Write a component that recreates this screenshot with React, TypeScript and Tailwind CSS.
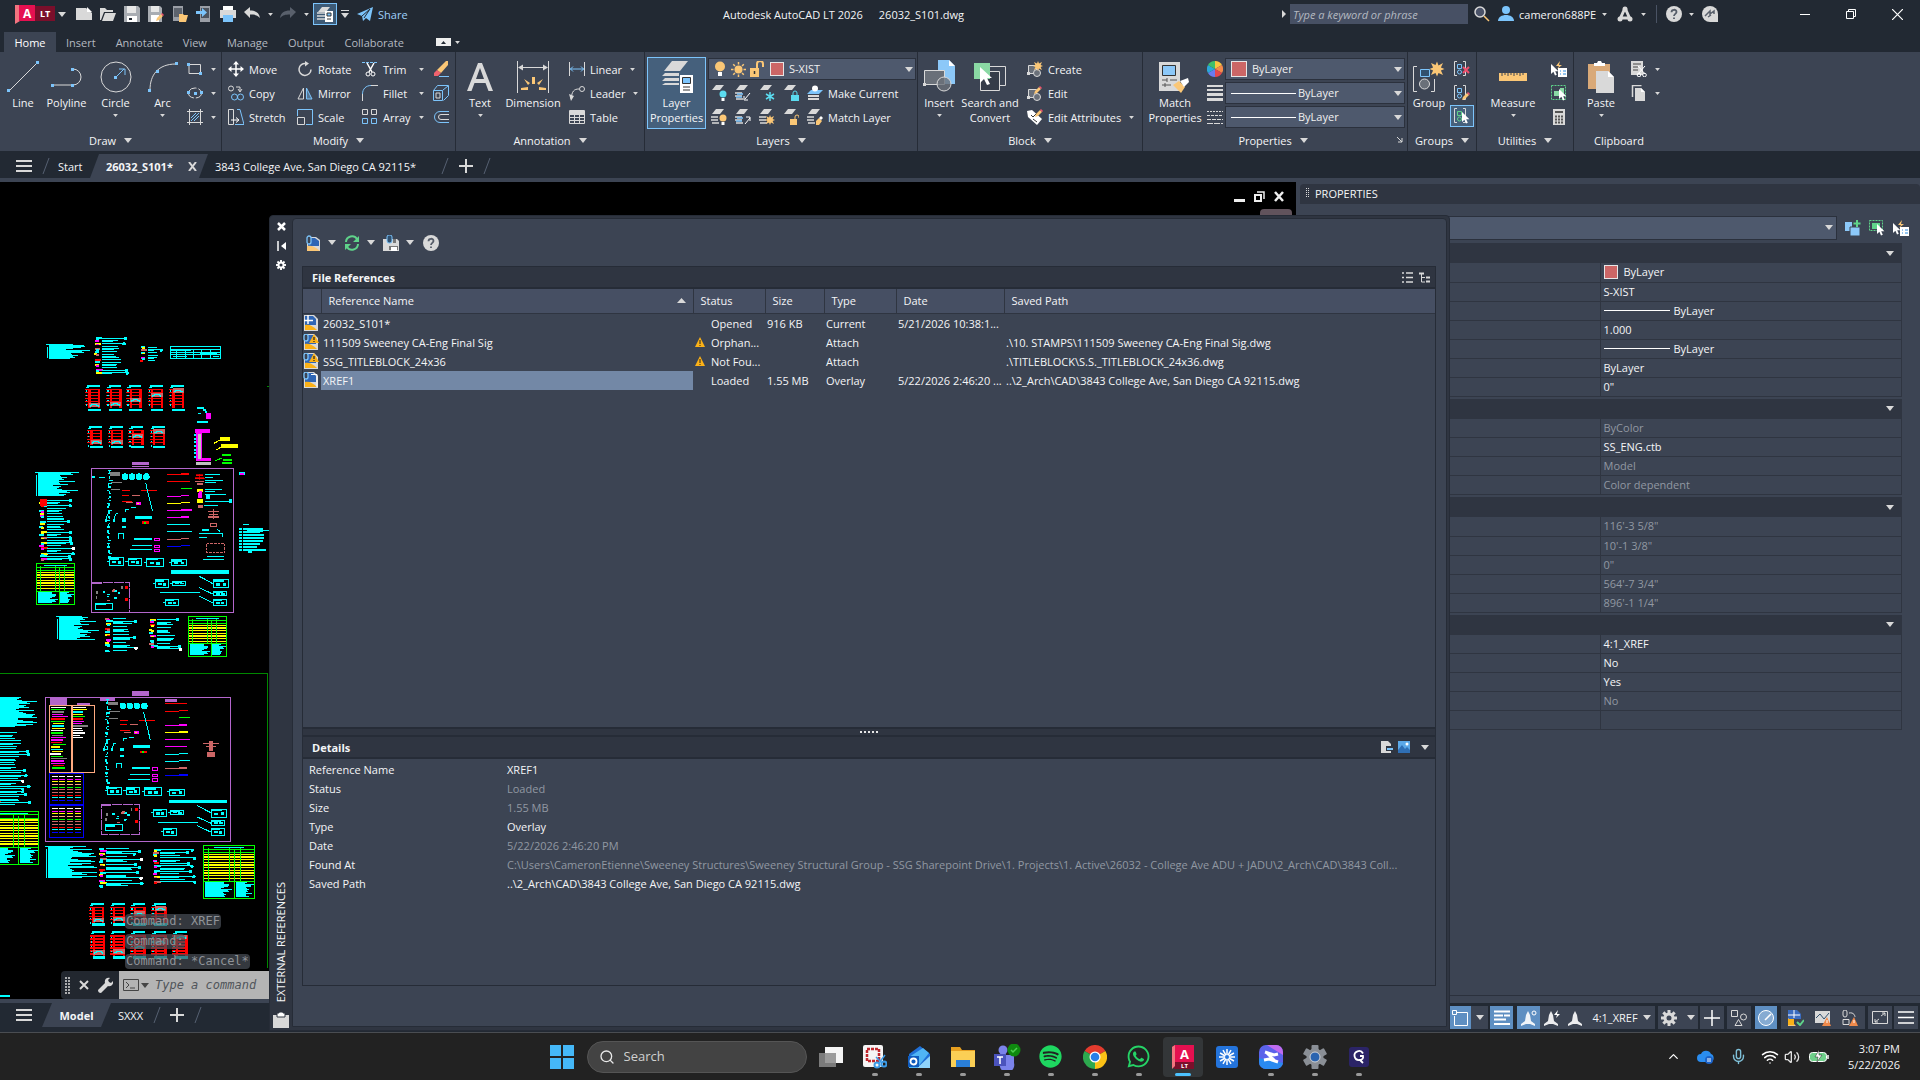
import React from 'react';
import { ChevronUp, Mic, Search, Volume2, Wifi } from 'lucide-react';
import { FaSpotify, FaWhatsapp } from 'react-icons/fa';

const G = '#d9d9d9';
const B = '#7cc4fb';
const O = '#fbc776';
const GR = '#5fd38a';
const RED = '#cc6666';
const CY = '#00ffff';

interface IcProps {
  w?: number;
  h?: number;
  vb?: string;
  children: React.ReactNode;
}

const Ic: React.FC<IcProps> = ({ w = 16, h = 16, vb, children }) => (
  <svg width={w} height={h} viewBox={vb ?? `0 0 ${w} ${h}`} fill="none" className="shrink-0" aria-hidden="true">
    {children}
  </svg>
);

const Caret: React.FC<{ big?: boolean }> = ({ big }) => (
  <svg width={big ? 8 : 5} height={big ? 5 : 3} viewBox="0 0 8 5" className="shrink-0" aria-hidden="true">
    <path d="M0 0h8L4 5z" fill={G} />
  </svg>
);

/* ---------- shared glyphs ---------- */

const Cursor = ({ x, y }: { x: number; y: number }) => (
  <path transform={`translate(${x} ${y})`} d="M0 0v10l2.4-2.2L4 11.6l1.8-.8L4.2 7.2h3.2z" fill="#fff" />
);
const Star = ({ x, y, s = 1 }: { x: number; y: number; s?: number }) => (
  <path
    transform={`translate(${x} ${y}) scale(${s})`}
    d="M0-5l1 2.600L4-4 2.600-1 5 0 2.600 1 4 4 1 2.600 0 5l-1-2.400L-4 4l1.400-3L-5 0l2.400-1L-4-4l3 1.400z"
    fill={O}
  />
);
const Sheet = ({ y, c = G }: { y: number; c?: string }) => <path d={`M5 ${y}h8l-4 5H1z`} fill={c} />;
const Pencil = ({ x, y }: { x: number; y: number }) => (
  <g transform={`translate(${x} ${y})`}>
    <path d="M0 7l1-3 4-4 2 2-4 4z" fill={O} />
    <path d="M5 0l1-1 2 2-1 1z" fill="#f0506e" />
  </g>
);
const Gear = ({ size = 16, c = G, hole = '#3c4453' }: { size?: number; c?: string; hole?: string }) => (
  <Ic w={size} h={size} vb="0 0 16 16">
    {[0, 45, 90, 135].map((a) => (
      <rect key={a} x="6.500" y="0" width="3" height="16" fill={c} transform={`rotate(${a} 8 8)`} />
    ))}
    <circle cx="8" cy="8" r="5.500" fill={c} />
    <circle cx="8" cy="8" r="2.500" fill={hole} />
  </Ic>
);

const Sun = () => (
  <Ic w={15} h={15}>
    {[0, 45, 90, 135].map((a) => (
      <path key={a} d="M7.500 0v2.500M7.500 12.500V15" stroke={O} strokeWidth="1.500" transform={`rotate(${a} 7.5 7.5)`} />
    ))}
    <circle cx="7.500" cy="7.500" r="4" fill={O} />
  </Ic>
);

const DwgIcon: React.FC<{ kind: 'plain' | 'warn' | 'clip' }> = ({ kind }) => (
  <Ic>
    <path d="M1 0h10l4 4v12H1z" fill={G} />
    <path d="M2 1h8l3 3v6H2z" fill="#2f66b5" />
    <path d="M2 15v-5c4-1 8 1 12 5z" fill="#fbb117" />
    {kind === 'plain' && <path d="M5 0v9M1 5.500h9" stroke="#fff" strokeWidth="1.500" />}
    {kind !== 'plain' && <rect x="1" y="0" width="4" height="7" rx="2" fill="#3c4453" stroke={B} strokeWidth="1.300" />}
    {kind === 'warn' && (
      <g>
        <path d="M11 0l5 9H6z" fill="#fbb117" />
        <path d="M11 3v3M11 7v1" stroke="#222" strokeWidth="1.200" />
      </g>
    )}
    {kind === 'clip' && <path d="M8 2.500h6V15" stroke="#fff" />}
  </Ic>
);

const Warn = () => (
  <Ic w={10} h={10}>
    <path d="M5 0l5 10H0z" fill="#fbb117" />
    <path d="M5 3v4M5 8v1" stroke="#222" />
  </Ic>
);

const HelpIcon = () => (
  <Ic>
    <circle cx="8" cy="8" r="8" fill={G} />
    <path d="M5.500 6.200C5.500 3 10.500 3 10.500 6c0 1.800-2.500 2-2.500 4M8 11.500V13" stroke="#555c68" strokeWidth="1.800" />
  </Ic>
);

const QuickSelect = () => (
  <Ic>
    <Cursor x={0} y={3} />
    <path d="M9 0L5 5h3L6 8l5-4H8z" fill={O} />
    <path d="M7 7h9v9H7z" fill="#fff" />
    <path d="M9 10h1M12 10h3M9 13h1M12 13h3" stroke="#2a8be0" />
  </Ic>
);

const ListIcon = () => (
  <Ic w={11} h={11}>
    <path d="M0 1h2M0 5.500h2M0 10h2M4 1h7M4 5.500h7M4 10h7" stroke={G} strokeWidth="1.300" />
  </Ic>
);

/* ---------- title bar ---------- */

const QuickAccess = () => (
  <div className="flex items-center">
    <button aria-label="Application menu" className="ml-[15px] flex h-5 items-center">
      <svg width="41" height="20" viewBox="0 0 41 20" aria-hidden="true">
        <path d="M0 1h5v16l-5 3z" fill="#f2747f" />
        <path d="M4 1h16v16H4z" fill="#e51050" />
        <path d="M20 2h20v15H20z" fill="#7a0f2b" />
        <text x="8" y="14" fontSize="12" fontWeight="700" fill="#fff" fontFamily="Open Sans">A</text>
        <text x="25" y="13" fontSize="9" fontWeight="700" fill="#fff" fontFamily="Open Sans">LT</text>
      </svg>
    </button>
    <span className="ml-[2px]"><Caret big /></span>
    <div className="ml-[10px] flex items-center gap-2">
      <Ic><path d="M0 2h10l6 5v7H0z" fill={G} /><path d="M11 1l5 5h-5z" fill="#fff" /></Ic>
      <Ic><path d="M0 14V2h5l2 2h6v2H4L1 14z" fill={G} /><path d="M5 7h11l-3 8H2z" fill={G} /></Ic>
      <Ic>
        <path d="M0 0h14l2 2v14H0z" fill="#a9adb3" /><path d="M3 0h9v7H3z" fill="#e6e6e6" /><path d="M3 10h10v6H3z" fill="#fff" /><path d="M5 12h3v2H5z" fill="#222933" />
      </Ic>
      <Ic>
        <path d="M0 0h12l2 2v14H0z" fill="#a9adb3" /><path d="M3 0h8v6H3z" fill="#e6e6e6" /><path d="M3 9h8v7H3z" fill="#fff" /><Pencil x={8} y={8} />
      </Ic>
      <Ic><path d="M1 0h10v15H1z" fill="#9a9ea6" /><path d="M2 2h8v9H2z" fill="#5d636d" /><path d="M7 8h4l1 1h4l-2 7H7z" fill={O} /></Ic>
      <Ic><path d="M4 0h10v16H4z" fill="#9a9ea6" /><path d="M5 2h8v10H5z" fill="#4c535e" /><path d="M0 5h6V2l5 4.500L6 11V8H0z" fill={B} /></Ic>
      <Ic>
        <path d="M3 0h10v4H3z" fill="#fff" /><path d="M0 4h16v8H0z" fill={G} /><path d="M3 9h10v7H3z" fill={B} />
      </Ic>
      <Ic><path d="M0 6l6-5v3.500c6 0 9 2 10 7.500-3-3-5-3.500-10-3.500V12z" fill={G} /></Ic>
    </div>
    <span className="ml-2"><Caret /></span>
    <span className="ml-[7px]">
      <Ic><path d="M16 6l-6-5v3.500C4 4.500 1 6.500 0 12c3-3 5-3.500 10-3.500V12z" fill="#59606c" /></Ic>
    </span>
    <span className="ml-2"><Caret /></span>
    <button aria-label="Layer state" className="ml-1 flex h-[22px] w-6 items-center justify-center border border-[#7cc4fb] bg-[#3d5a76]">
      <Ic>
        <Sheet y={1} /><path d="M0 7h8M0 10h8M0 13h8" stroke={G} strokeWidth="1.500" /><path d="M8 5h8v11H8z" fill="#fff" /><path d="M10 7h4v3h-4z" fill={B} stroke="#333" /><path d="M10 13h4" stroke="#333" />
      </Ic>
    </button>
    <span className="ml-1">
      <Ic w={8} h={8}><path d="M0 .5h8" stroke={G} /><path d="M0 3h8L4 8z" fill={G} /></Ic>
    </span>
    <button className="ml-2 flex items-center gap-[5px] text-[11px] text-[#9fd0fb]">
      <Ic><path d="M0 8L16 1l-3 14-4-3-3 3-1-5z" fill={B} /><path d="M5 10l8-7-6 9" stroke="#222933" /></Ic>
      Share
    </button>
  </div>
);

const TitleBar = () => (
  <header className="relative flex h-7 items-center justify-between bg-[#222933]">
    <QuickAccess />
    <div className="absolute left-[723px] flex gap-4 whitespace-pre">
      <span>Autodesk AutoCAD LT 2026</span>
      <span>26032_S101.dwg</span>
    </div>
    <div className="flex items-center pr-[17px]">
      <Ic w={4} h={8}><path d="M0 0l4 4-4 4z" fill={G} /></Ic>
      <input
        aria-label="Search help"
        placeholder="Type a keyword or phrase"
        className="ml-1 h-5 w-[178px] bg-[#475064] px-[3px] italic text-white placeholder:text-[#b4b9c1]"
      />
      <span className="ml-[6px]">
        <Ic><circle cx="6" cy="6" r="5" stroke={G} strokeWidth="1.500" fill="#4a5268" /><path d="M10 10l5 5" stroke={O} strokeWidth="1.500" /></Ic>
      </span>
      <span className="ml-2">
        <Ic><circle cx="8" cy="4" r="4" fill={B} /><path d="M0 15c0-8 16-8 16 0z" fill={B} /></Ic>
      </span>
      <button className="ml-[5px] flex items-center text-[11px]"><span className="w-[83px] text-left">cameron688PE</span><Caret /></button>
      <button aria-label="Autodesk App Store" className="ml-[10px] flex items-center gap-2">
        <Ic><path d="M8 2L3 13M8 2l5 11M3 12h10" stroke={G} strokeWidth="3" /><circle cx="8" cy="3" r="2.500" fill={G} /><circle cx="3" cy="13" r="2.500" fill={G} /><circle cx="13" cy="13" r="2.500" fill={G} /></Ic>
        <Caret />
      </button>
      <span className="ml-[10px] h-[18px] w-px bg-[#4a5364]" />
      <button aria-label="Help" className="ml-[9px] flex items-center gap-[7px]"><HelpIcon /><Caret /></button>
      <button aria-label="Assistant" className="ml-2">
        <Ic><path d="M8 0a8 8 0 018 8v8H8A8 8 0 018 0z" fill={G} /><path d="M3 10l5-5v3l4-3v3M6 11l3-2" stroke="#59606c" strokeWidth="1.500" /></Ic>
      </button>
      <button aria-label="Minimize" className="ml-[82px]"><Ic w={10} h={10}><path d="M0 5.500h10" stroke="#fff" /></Ic></button>
      <button aria-label="Restore" className="ml-9"><Ic w={10} h={10}><path d="M.5 2.500h7v7h-7zM2.500 2.500v-2h7v7h-2" stroke="#fff" /></Ic></button>
      <button aria-label="Close" className="ml-9"><Ic w={11} h={11}><path d="M0 0l11 11M11 0L0 11" stroke="#fff" strokeWidth="1.200" /></Ic></button>
    </div>
  </header>
);

const RibbonTabs = () => (
  <nav className="flex h-6 items-end bg-[#222933] pl-1">
    <button className="h-5 w-[52px] bg-[#3c4453] text-[11px] text-white">Home</button>
    {['Insert', 'Annotate', 'View', 'Manage', 'Output', 'Collaborate'].map((t) => (
      <button key={t} className="h-5 px-[10px] text-[11px] text-[#b4b9c1]">{t}</button>
    ))}
    <button aria-label="Ribbon display" className="ml-[22px] flex h-5 items-center gap-1">
      <Ic w={15} h={8}><path d="M0 0h15v8H0z" fill="#eee" /><path d="M5 6h5L7.500 3z" fill="#222933" /></Ic>
      <Caret />
    </button>
  </nav>
);

/* ---------- ribbon ---------- */

const Panel: React.FC<{ title: string; width: string; plain?: boolean; launcher?: boolean; children: React.ReactNode }> = ({
  title, width, plain, launcher, children,
}) => (
  <section className={`flex flex-col pt-[5px] ${width} ${plain ? '' : 'border-r border-[#262c37]'}`}>
    <div className="flex h-[72px]">{children}</div>
    <div className="flex h-[22px] items-center justify-center gap-2 text-[11px]">
      {launcher && <span className="flex-1" />}
      {title}
      {!plain && <Caret big />}
      {launcher && (
        <span className="flex flex-1 justify-end pr-1">
          <Ic w={6} h={6}><path d="M0 0l5 5M5 1v4H1" stroke={G} /></Ic>
        </span>
      )}
    </div>
  </section>
);

const Big: React.FC<{ label: string; width: string; caret?: boolean; on?: boolean; children: React.ReactNode }> = ({
  label, width, caret, on, children,
}) => (
  <button
    className={`flex shrink-0 flex-col items-center text-[11px] leading-[15px] ${width} ${
      on ? 'border border-[#7cc4fb] bg-[#45607c]' : 'border border-transparent'
    }`}
  >
    <span className="flex h-[37px] items-center">{children}</span>
    <span className="whitespace-pre text-center">{label}</span>
    {caret && <span className="mt-1"><Caret /></span>}
  </button>
);

const Tool: React.FC<{ label?: string; caret?: boolean; name?: string; labelWidth?: string; children: React.ReactNode }> = ({
  label, caret, name, labelWidth = '', children,
}) => (
  <button aria-label={name ?? label} className="flex h-6 items-center whitespace-nowrap text-[11px]">
    {children}
    {label && <span className={`ml-[5px] text-left ${labelWidth}`}>{label}</span>}
    {caret && <span className="ml-2"><Caret /></span>}
  </button>
);

const Dot = ({ x, y }: { x: number; y: number }) => <rect x={x} y={y} width="3" height="3" fill={B} />;

const DrawPanel = () => (
  <Panel title="Draw" width="w-[222px]">
    <Big label="Line" width="w-[46px]">
      <Ic w={32} h={32}><path d="M2 30L30 2" stroke={G} /><Dot x={0} y={28} /><Dot x={29} y={0} /></Ic>
    </Big>
    <Big label="Polyline" width="w-[41px]">
      <Ic w={32} h={32}><path d="M2 24h20a7 7 0 000-16" stroke={G} /><Dot x={0} y={23} /><Dot x={20} y={23} /><Dot x={20} y={7} /></Ic>
    </Big>
    <Big label="Circle" width="w-[57px]" caret>
      <Ic w={32} h={32}><circle cx="16" cy="16" r="15" stroke={G} /><path d="M16 16l8-8M19 8h6v6" stroke={B} /><Dot x={14} y={15} /></Ic>
    </Big>
    <Big label="Arc" width="w-[37px]" caret>
      <Ic w={30} h={32}><path d="M2 29C2 14 10 3 28 3" stroke={G} /><Dot x={0} y={28} /><Dot x={8} y={9} /><Dot x={27} y={1} /></Ic>
    </Big>
    <div className="ml-[6px] flex flex-col">
      <Tool name="Rectangle" caret><Ic><path d="M2 3.500h11.500v9H2z" stroke={G} /><Dot x={0} y={2} /><Dot x={12} y={11} /></Ic></Tool>
      <Tool name="Ellipse" caret><Ic><ellipse cx="8" cy="8" rx="6.500" ry="5" stroke={G} strokeDasharray="8 2" /><Dot x={0} y={6} /><Dot x={7} y={7} /><Dot x={13} y={6} /></Ic></Tool>
      <Tool name="Hatch" caret><Ic><path d="M2.500 0v16M13.500 0v16M0 2.500h16M0 13.500h16" stroke={G} /><path d="M4 9l5-5M4 12l8-8M7 12l5-5" stroke={B} /></Ic></Tool>
    </div>
  </Panel>
);

const ModifyPanel = () => (
  <Panel title="Modify" width="w-[234px]">
    <div className="ml-[6px] flex w-[69px] flex-col">
      <Tool label="Move"><Ic><path d="M8 1v14M1 8h14" stroke="#fff" strokeWidth="1.500" /><path d="M8 0l3 3.500H5zM8 16l3-3.500H5zM0 8l3.500-3v6zM16 8l-3.500-3v6z" fill="#fff" /></Ic></Tool>
      <Tool label="Copy"><Ic><circle cx="3" cy="3.500" r="2.500" stroke={G} /><path d="M8 2h4v4M10 4l2 3 2-3" stroke={G} /><circle cx="6.500" cy="12" r="3" stroke={B} /><circle cx="12.500" cy="12" r="3" stroke={B} /></Ic></Tool>
      <Tool label="Stretch"><Ic><path d="M.5.5h5v15h-5z" stroke={G} /><path d="M9 .5l3 0 4 15H7" stroke={B} /><path d="M3 11h7M8 8.500l3 2.500-3 2.500" stroke="#fff" /></Ic></Tool>
    </div>
    <div className="flex w-[65px] flex-col">
      <Tool label="Rotate"><Ic><path d="M9 2.500a6 6 0 105 6" stroke={G} strokeWidth="1.500" /><path d="M8 0l4 2.500L8 5.500z" fill={G} /></Ic></Tool>
      <Tool label="Mirror"><Ic><path d="M6.500 3v11H1z" stroke={G} /><path d="M9.500 3v11H15z" stroke={B} fill={B} fillOpacity=".4" /></Ic></Tool>
      <Tool label="Scale"><Ic><path d="M.5 7V.5h15v15H9" stroke={B} /><path d="M.5 8.500h7v7h-7z" stroke={G} /></Ic></Tool>
    </div>
    <div className="flex w-[71px] flex-col">
      <Tool label="Trim" labelWidth="w-[28px]" caret><Ic><path d="M0 1.500h16" stroke={B} strokeDasharray="3 1" /><path d="M5 2l5 9M12 2L7 11" stroke="#fff" strokeWidth="1.500" /><circle cx="6" cy="13" r="2" stroke="#fff" /><circle cx="11" cy="13" r="2" stroke="#fff" /></Ic></Tool>
      <Tool label="Fillet" labelWidth="w-[28px]" caret><Ic><path d="M.5 16V9" stroke={G} /><path d="M.5 9C.5 4 4 .5 9 .5" stroke={B} /><path d="M9 .5h7" stroke={G} /></Ic></Tool>
      <Tool label="Array" labelWidth="w-[28px]" caret><Ic><path d="M.5.5h5v5h-5zM9.500.5h5v5h-5z" stroke={G} /><path d="M.5 9.500h5v5h-5zM9.500 9.500h5v5h-5z" stroke={B} /></Ic></Tool>
    </div>
    <div className="flex flex-col">
      <Tool name="Erase"><Ic><path d="M4 9l9-9h2v4l-7 8z" fill={O} /><path d="M4 9l4 3-3 3H1v-3z" fill="#f0626e" /><path d="M6 15.500h10" stroke={B} /></Ic></Tool>
      <Tool name="Explode"><Ic><path d="M.5 5.500h9v10h-9zM.5 5.500l4-5h11v10l-5 5M10 5l5-4" stroke={B} /><path d="M3 8h4v5H3z" stroke={G} /></Ic></Tool>
      <Tool name="Offset"><Ic><path d="M16 2.500H7a5.500 5.500 0 000 11h9" stroke={B} /><path d="M16 5.500H8a2.500 2.500 0 000 5h8" stroke={G} /></Ic></Tool>
    </div>
  </Panel>
);

const AnnotationPanel = () => (
  <Panel title="Annotation" width="w-[189px]">
    <Big label="Text" width="w-[48px]" caret>
      <Ic w={26} h={28}><path d="M0 28L11 0h4l11 28h-4.500l-3-8h-11l-3 8zM9 16h8L13 5z" fill={G} /></Ic>
    </Big>
    <Big label="Dimension" width="w-[58px]">
      <Ic w={32} h={32}>
        <path d="M.5 0v32M31.500 0v32M2 6.500h28" stroke={G} /><path d="M1 6.500l5-3v6zM31 6.500l-5-3v6z" fill={G} />
        <path d="M15 16h3v7h-3zM7 18l4 6 2-2zM26 18l-4 6-2-2zM4 27l7-1v3H4zM29 27l-7-1v3h7z" fill={O} />
      </Ic>
    </Big>
    <div className="ml-[7px] flex flex-col">
      <Tool label="Linear" caret><Ic><path d="M.5 1v14M15.500 1v14" stroke={G} /><path d="M1 8h14M4 5.500L1.500 8 4 10.500M12 5.500L14.500 8 12 10.500" stroke={B} /></Ic></Tool>
      <Tool label="Leader" caret><Ic><path d="M2 14C3 6 5 4 10 4" stroke={G} /><circle cx="13" cy="4" r="2.500" stroke={G} /><path d="M0 9l2 7 3-5z" fill={G} /></Ic></Tool>
      <Tool label="Table"><Ic><path d="M.5 1.500h15v13H.5zM.5 5.500h15M.5 8.500h15M.5 11.500h15M5.500 5v10M10.500 5v10" stroke={G} /><path d="M1 2h14v3H1z" fill={G} /></Ic></Tool>
    </div>
  </Panel>
);

const LayerGlyph: React.FC<{ children: React.ReactNode; stack?: boolean }> = ({ children, stack }) => (
  <Ic>
    <Sheet y={0} />
    {stack && <path d="M0 8h7M0 11h7M1 14h7" stroke={G} strokeWidth="1.500" />}
    {children}
  </Ic>
);

const Bulb = ({ c, x = 8 }: { c: string; x?: number }) => (
  <g><circle cx={x + 4} cy="9" r="3.500" fill={c} /><path d={`M${x + 2.5} 13h3v3h-3z`} fill="#fff" /></g>
);

const selectCls = 'w-full appearance-none border border-[#2b313d] bg-[#4e596d] text-[11px] leading-[16px] text-[#f0f0f0]';

const LayersPanel = () => (
  <Panel title="Layers" width="w-[273px]">
    <Big label={'Layer\nProperties'} width="ml-[2px] w-[59px]" on>
      <Ic w={32} h={32}>
        <path d="M11 0h16l-8 10H3z" fill={G} />
        <path d="M4 12h14v3H1zM4 17h14v3H1zM4 22h14v2H1z" fill={G} />
        <path d="M19 14h13v18H19z" fill="#fff" /><path d="M21.500 16.500h8v6h-8z" fill={B} stroke="#333" /><path d="M22 26h7M22 29h7" stroke="#333" />
      </Ic>
    </Big>
    <div className="ml-[2px] w-[208px]">
      <div className="relative flex h-6 items-center">
        <select aria-label="Layer" className={`${selectCls} h-[22px] pl-20`}><option>S-XIST</option></select>
        <div className="pointer-events-none absolute inset-x-0 flex items-center pr-[3px]">
          <span className="ml-1 flex items-center gap-[3px]">
            <Ic><circle cx="8" cy="5.500" r="5" fill={O} /><path d="M6 11h4v4H6z" fill="#fff" /></Ic>
            <Sun />
            <Ic><path d="M1 7h9v9H1z" fill={O} /><path d="M8 7V3a3 3 0 016 0v3" stroke={O} strokeWidth="2" /><path d="M5.500 10v3" stroke="#333" strokeWidth="1.500" /></Ic>
            <span className="ml-[2px] size-[14px] border border-[#e6e6e6] bg-[#cc6666]" />
          </span>
          <span className="ml-auto"><Caret big /></span>
        </div>
      </div>
      <div className="ml-[3px] flex gap-2">
        <Tool name="Off"><LayerGlyph><Bulb c="#5bdcf0" /></LayerGlyph></Tool>
        <Tool name="Isolate"><LayerGlyph stack><path d="M2 9h6M1 12h6" stroke={B} strokeWidth="1.500" /><path d="M15 8l-5 6M9 11v4h4" stroke="#fff" /></LayerGlyph></Tool>
        <Tool name="Freeze"><LayerGlyph><path d="M11 7v9M7 9l8 5M15 9l-8 5" stroke="#5bdcf0" strokeWidth="1.500" /></LayerGlyph></Tool>
        <Tool name="Lock"><LayerGlyph><path d="M8 10h8v6H8z" fill="#5bdcf0" /><path d="M10 10V8a2 2 0 014 0v2" stroke="#5bdcf0" /></LayerGlyph></Tool>
        <Tool label="Make Current"><Ic><path d="M4 5h12l-4 4H0z" fill={B} /><circle cx="8" cy="3.500" r="3" fill="#fff" /><path d="M1 11h11M1 14h11" stroke={G} strokeWidth="2" /></Ic></Tool>
      </div>
      <div className="ml-[3px] flex gap-2">
        <Tool name="Turn on"><LayerGlyph stack><Bulb c={O} /></LayerGlyph></Tool>
        <Tool name="Unisolate"><LayerGlyph stack><path d="M2 9h6M1 12h6" stroke={B} strokeWidth="1.500" /><path d="M10 15l5-6M11 8h4v4" stroke="#fff" /></LayerGlyph></Tool>
        <Tool name="Thaw"><LayerGlyph stack><Star x={11} y={11} /></LayerGlyph></Tool>
        <Tool name="Unlock"><LayerGlyph><path d="M7 10h7v6H7z" fill={O} /><path d="M12 10V8a2 2 0 014 0v1" stroke={O} /></LayerGlyph></Tool>
        <Tool label="Match Layer"><LayerGlyph stack><path d="M9 12l3-3 3 3-3 4H9z" fill={O} /><path d="M12 9l2-2 2 2-2 2z" fill="#fff" /></LayerGlyph></Tool>
      </div>
    </div>
  </Panel>
);

const BlockGlyph = ({ children }: { children: React.ReactNode }) => (
  <Ic><path d="M1.500 4.500h8v8h-8z" fill="#6a7079" stroke={G} /><circle cx="10" cy="12" r="3.500" fill="#6a7079" stroke={G} /><path d="M0 11h3v3H0z" fill={G} />{children}</Ic>
);

const BlockPanel = () => (
  <Panel title="Block" width="w-[225px]">
    <Big label="Insert" width="w-[42px]" caret>
      <Ic w={32} h={34}>
        <path d="M15 0h11l6 6v18H15z" fill="#8cc8f8" /><path d="M26 0l6 6h-6z" fill="#fff" />
        <path d="M1.500 10.500h20v14h-20z" fill="#6a7079" stroke={G} /><circle cx="21" cy="24" r="7" fill="#6a7079" fillOpacity=".8" stroke={G} /><path d="M0 23h3v3H0z" fill={G} />
      </Ic>
    </Big>
    <Big label={'Search and\nConvert'} width="w-[60px]">
      <Ic w={32} h={32}>
        <path d="M13 5.500h18.500v19H26" stroke={G} /><path d="M7 10.500h18.500v19H6.500V18" stroke={G} fill="#353c49" /><path d="M0 2h16v16H0z" fill="#8ad9a4" />
        <path d="M6 6v16l4-4 3 6 3-1-3-6h5z" fill="#fff" />
      </Ic>
    </Big>
    <div className="ml-[7px] flex flex-col">
      <Tool label="Create"><BlockGlyph><Star x={11} y={5} /></BlockGlyph></Tool>
      <Tool label="Edit"><BlockGlyph><Pencil x={7} y={2} /></BlockGlyph></Tool>
      <Tool label="Edit Attributes" caret>
        <Ic><path d="M0 2l5-1 10 9-5 6L1 8z" fill="#fff" /><path d="M4 6l2 2 4-4M6 10l4 3" stroke="#333" /><Pencil x={8} y={1} /></Ic>
      </Tool>
    </div>
  </Panel>
);

const LineSelect: React.FC<{ name: string; swatch?: boolean }> = ({ name, swatch }) => (
  <div className="relative flex h-6 items-center">
    <select aria-label={name} className={`${selectCls} h-[22px] ${swatch ? 'pl-[26px]' : 'pl-[72px]'}`}><option>ByLayer</option></select>
    <div className="pointer-events-none absolute inset-x-0 flex items-center justify-between pl-[6px] pr-[3px]">
      {swatch ? <span className="size-4 border border-[#e6e6e6] bg-[#cc6666]" /> : <span className="h-px w-[65px] bg-white" />}
      <Caret big />
    </div>
  </div>
);

const PropertiesRibbonPanel = () => (
  <Panel title="Properties" width="w-[265px]" launcher>
    <Big label={'Match\nProperties'} width="w-[64px]">
      <Ic w={32} h={32}>
        <path d="M0 1h21v29H0z" fill={G} /><path d="M3.500 4.500h13v10h-13z" fill="#8cc8f8" stroke="#333" /><path d="M3 19h5M11 19h7M3 24h9M8 17v4M6 22v4" stroke="#555" />
        <path d="M14 24l6-4 6 6-4 6z" fill={O} /><path d="M21 20l8-3 1 4-5 5z" fill="#fff" />
      </Ic>
    </Big>
    <div className="flex flex-col">
      <Tool name="Color">
        <Ic>
          <path d="M8 8L8 0a8 8 0 017 4z" fill="#f9c440" /><path d="M8 8l7-4a8 8 0 010 8z" fill="#f58a4b" /><path d="M8 8l7 4a8 8 0 01-7 4z" fill="#e5484d" />
          <path d="M8 8v8a8 8 0 01-7-4z" fill="#6a7bf0" /><path d="M8 8l-7 4a8 8 0 010-8z" fill="#2aa7d8" /><path d="M8 8L1 4a8 8 0 017-4z" fill="#3fbf6a" />
        </Ic>
      </Tool>
      <Tool name="Lineweight"><Ic><path d="M0 1h16M0 5h16" stroke={G} strokeWidth="2" /><path d="M0 9.500h16M0 14.500h16" stroke={G} strokeWidth="3" /></Ic></Tool>
      <Tool name="Linetype"><Ic><path d="M0 2.500h16" stroke={G} strokeDasharray="2 1" /><path d="M0 6.500h16" stroke={G} strokeDasharray="3 1" /><path d="M0 10.500h16" stroke={G} strokeDasharray="4 1" /><path d="M0 14.500h16" stroke={G} strokeDasharray="6 1" /></Ic></Tool>
    </div>
    <div className="ml-[2px] w-[180px]">
      <LineSelect name="Object color" swatch />
      <LineSelect name="Lineweight" />
      <LineSelect name="Linetype" />
    </div>
  </Panel>
);

const GroupBase = ({ c = B }: { c?: string }) => (
  <g><path d="M3 .5H.5v14H3M9 .5h2.500v14H9" stroke={G} /><path d="M3.500 3.500h4v4h-4z" stroke={c} /><circle cx="5.500" cy="11" r="2" stroke={c} /></g>
);

const ToolsRight = () => (
  <>
    <Panel title="Groups" width="w-[69px]">
      <Big label="Group" width="w-[42px]">
        <Ic w={32} h={32}>
          <path d="M4 5.500H.5v25H4M18 30.500h3.500V18" stroke={G} /><path d="M7.500 8.500h9v7h-9z" stroke={B} fill="#31506e" /><circle cx="11.500" cy="23" r="5" fill="#6a7079" stroke={G} /><Star x={24} y={8} s={1.5} />
        </Ic>
      </Big>
      <div className="flex w-6 flex-col items-center">
        <Tool name="Ungroup"><Ic><GroupBase /><path d="M9 6l6 6M15 6l-6 6" stroke="#f0506e" strokeWidth="2" /></Ic></Tool>
        <Tool name="Group edit"><Ic><GroupBase /><Pencil x={8} y={8} /></Ic></Tool>
        <button aria-label="Group selection" className="flex h-[22px] w-6 items-center justify-center self-center border border-[#7cc4fb] bg-[#45607c]">
          <Ic><GroupBase c={GR} /><Cursor x={8} y={4} /></Ic>
        </button>
      </div>
    </Panel>
    <Panel title="Utilities" width="w-[97px]">
      <Big label="Measure" width="w-[72px]" caret>
        <Ic w={28} h={8}><path d="M0 0h28v8H0z" fill={O} /><path d="M3 0v3M6 0v2M9 0v3M12 0v2M15 0v3M18 0v2M21 0v3M24 0v2" stroke="#3c4453" /></Ic>
      </Big>
      <div className="flex w-5 flex-col items-center">
        <Tool name="Quick select"><QuickSelect /></Tool>
        <Tool name="Select all"><Ic><path d="M.5.5h14v14H.5z" stroke={GR} strokeDasharray="2 1" /><path d="M3 6h6V3h4v8H3z" fill="#8ad9a4" /><Cursor x={8} y={4} /></Ic></Tool>
        <Tool name="Calculator"><Ic><path d="M2 0h12v16H2z" fill={G} /><path d="M4 2h8v2H4z" fill="#555" /><path d="M4 7.500h8M4 10.500h8M4 13.500h8" stroke="#555" strokeWidth="1.800" strokeDasharray="2 1" /></Ic></Tool>
      </div>
    </Panel>
    <Panel title="Clipboard" width="w-[90px]" plain>
      <Big label="Paste" width="w-[54px]" caret>
        <Ic w={26} h={32}><path d="M0 3h22v25H0z" fill="#d9a978" /><path d="M6 2h3l1-2h3l1 2h3v3H6z" fill="#fff" /><path d="M8 10h12l6 6v16H8z" fill={G} /><path d="M20 10l6 6h-6z" fill="#fff" /></Ic>
      </Big>
      <div className="ml-[3px] flex flex-col">
        <Tool name="Cut" caret><Ic><path d="M0 0h12v14H0z" fill={G} /><path d="M2 3h8M2 6h5M2 9h5" stroke="#444" /><path d="M7 5l7 8M14 5l-7 8" stroke="#fff" /><circle cx="8" cy="14" r="1.800" stroke="#fff" /><circle cx="13.500" cy="14" r="1.800" stroke="#fff" /></Ic></Tool>
        <Tool name="Copy clip" caret><Ic><path d="M1.500 12V.5h9" stroke={G} strokeWidth="1.500" /><path d="M4 3h6l4 4v9H4z" fill={G} /><path d="M10 3l4 4h-4z" fill="#fff" /></Ic></Tool>
      </div>
    </Panel>
  </>
);

const Slash = () => (
  <svg width="8" height="16" viewBox="0 0 8 16" className="shrink-0" aria-hidden="true"><path d="M1 16L7 0" stroke="#566072" /></svg>
);
const Plus = () => <Ic w={14} h={14}><path d="M7 0v14M0 7h14" stroke={G} strokeWidth="2" /></Ic>;
const Burger = () => <Ic w={16} h={12}><path d="M0 1h16M0 6h16M0 11h16" stroke={G} strokeWidth="2" /></Ic>;

const FileTabs = () => (
  <nav className="flex h-[27px] items-center bg-[#222933] pl-4 pt-[3px] text-[11px]">
    <button aria-label="Tab menu"><Burger /></button>
    <span className="ml-[10px]"><Slash /></span>
    <button className="ml-2 w-[32px] text-left">Start</button>
    <button className="flex h-6 w-[118px] items-center bg-[#3c4453] pl-4 font-bold [clip-path:polygon(9px_0,100%_0,109px_100%,0_100%)]">
      <span className="w-[82px] text-left">26032_S101*</span>
      <Ic w={9} h={9}><path d="M1 0l7 9M8 0L1 9" stroke={G} strokeWidth="2" /></Ic>
    </button>
    <button className="ml-[7px] w-[226px] text-left">3843 College Ave, San Diego CA 92115*</button>
    <Slash />
    <button aria-label="New tab" className="ml-[10px]"><Plus /></button>
    <span className="ml-[10px]"><Slash /></span>
  </nav>
);

/* ---------- model space drawing ---------- */

const rnd = (i: number) => {
  const v = Math.sin(i * 12.9898 + 4.1) * 43758.5453;
  return v - Math.floor(v);
};

interface BoxProps { x: number; y: number; w: number; h: number; seed?: number; c?: string }

const TextBlock: React.FC<BoxProps> = ({ x, y, w, h, seed = 1, c = CY }) => (
  <g fill={c}>
    <rect x={x} y={y} width="26" height="4" />
    <rect x={x + 3} y={y + 9} width="4" height={h - 12} />
    {Array.from({ length: Math.floor(h / 3) }, (_, i) => (
      <rect key={i} x={x + 9} y={y + i * 3} width={(w - 9) * (0.35 + 0.65 * rnd(i + seed))} height="3" />
    ))}
  </g>
);

const mix = [CY, '#ff0', CY, '#f0f', '#ff0', CY, RED, CY, '#ff0', '#f0f', '#f00'];

/* detail marks on the left with note leaders running right */
const Notes: React.FC<BoxProps> = ({ x, y, w, h, seed = 1 }) => (
  <g>
    {Array.from({ length: Math.floor(h / 8) }, (_, i) => {
      const r = rnd(i * 3 + seed);
      const len = (w - 36) * (0.45 + 0.55 * r);
      const yy = y + i * 8;
      return (
        <g key={i}>
          {i % 4 !== 3 && <rect x={x + r * 6} y={yy + 1} width={10 + r * 12} height="6" fill={mix[(i + seed) % 11]} />}
          {i % 2 === 0 && <rect x={x + 6} y={yy + 4} width="9" height="5" fill={mix[(i * 2 + seed + 3) % 11]} />}
          <rect x={x + 24} y={yy + 2} width={len} height="3" fill={CY} />
          {i % 3 === 1 && <rect x={x + 24} y={yy + 5} width={(w - 40) * (0.3 + 0.5 * rnd(i + 9))} height="3" fill={CY} />}
          {r > 0.55 && <rect x={x + 22 + len} y={yy} width="10" height="9" rx="3" fill={i % 7 === 4 ? '#fff' : CY} />}
        </g>
      );
    })}
  </g>
);

const Schedule: React.FC<BoxProps> = ({ x, y, w, h }) => {
  const top = h * 0.68;
  return (
    <g>
      {Array.from({ length: Math.floor((top - 24) / 8) }, (_, i) => (
        <rect key={i} x={x} y={y + 24 + i * 8} width={w} height="4" fill="#ff0" />
      ))}
      <rect x={x + w * 0.2} y={y + 4} width={w * 0.6} height="3" fill={CY} />
      {Array.from({ length: Math.floor((h - top - 4) / 3) }, (_, i) => (
        <g key={i} fill={CY}>
          <rect x={x + 3} y={y + top + 2 + i * 3} width={w * (0.3 + 0.23 * rnd(i))} height="3" />
          <rect x={x + w * 0.63} y={y + top + 2 + i * 3} width={w * (0.15 + 0.2 * rnd(i + 5))} height="3" />
        </g>
      ))}
      <path
        d={`M${x} ${y}h${w}v${h}h${-w}zM${x} ${y + 10}h${w}M${x} ${y + 20}h${w}M${x} ${y + top}h${w}M${x + w * 0.1} ${y + 8}v${top - 8}M${x + w * 0.5} ${y + 8}v${top - 8}M${x + w * 0.73} ${y + 8}v${top - 8}M${x + w * 0.6} ${y + 14}v${h - 14}`}
        stroke="#0f0" strokeWidth="3" fill="none"
      />
    </g>
  );
};

const Ladder: React.FC<{ x: number; y: number; h: number; hot: number }> = ({ x, y, h, hot }) => (
  <g>
    <rect x={x + 4} y={y} width="38" height="5" fill={CY} />
    <rect x={x} y={y + 5} width="10" height="3" fill={CY} />
    <path d={`M${x + 10} ${y + 12}V${y + h - 8}M${x + 39} ${y + 12}V${y + h - 8}`} stroke="#f00" strokeWidth="7" />
    {Array.from({ length: Math.floor((h - 16) / 9) }, (_, i) => (
      <rect key={i} x={x - 3} y={y + 12 + i * 9} width="44" height="4" fill="#f00" />
    ))}
    <rect x={x + 8} y={y + 10 + (h - 30) * hot} width="34" height="13" fill={RED} />
    <path d={`M${x + 12} ${y + 22 + (h - 30) * hot}v-4h5v-3h14v3h5v4`} stroke={CY} strokeWidth="3" fill="none" />
    {[0, 1, 2, 3].map((i) => <rect key={i} x={x} y={y + 16 + i * 14} width="4" height="4" fill={CY} />)}
    <rect x={x + 6} y={y + h - 7} width="38" height="7" fill={CY} />
  </g>
);

const Callout: React.FC<BoxProps> = ({ x, y, w, h }) => (
  <g>
    <rect x={x} y={y} width={w} height={h} stroke={CY} strokeWidth="3" fill="none" />
    <path d={`M${x} ${y}h${w * 0.7}v6h${-w * 0.7}zM${x + w * 0.2} ${y + h * 0.45}h12v${h * 0.3}h-12zM${x + w * 0.6} ${y + h * 0.4}h10v${h * 0.4}h-10zM${x - 8} ${y + h * 0.4}h8v3h-8z`} fill={CY} />
  </g>
);

/* one plan sheet: section marks, legend lines and detail bubbles */
const PlanSheet: React.FC<{ x: number; y: number }> = ({ x, y }) => (
  <g transform={`translate(${x} ${y})`}>
    {Array.from({ length: 27 }, (_, i) => (
      <g key={i} fill={CY}>
        <rect x={46 + rnd(i) * 8} y={4 + i * 10} width={4 + rnd(i + 4) * 8} height="4" />
        {i % 2 === 0 && <rect x={48 + rnd(i + 2) * 6} y={8 + i * 10} width="4" height="5" />}
      </g>
    ))}
    <path d="M56 12h30v10H56zM60 41h32v3H60zM60 62h26v3H60z" fill="#808080" />
    {[101, 122, 143, 165].map((cx) => <circle key={cx} cx={cx} cy="25" r="10" fill={CY} />)}
    <path d="M92 66h24v3H92zM92 80h20v3H92zM92 98h30v3H92zM150 66h46v3h-46z" fill="#f00" />
    <path d="M122 80h24v3h-24zM104 102h22v3h-22z" fill={RED} />
    <path d="M163 44l20 83M80 212v-16h16v16M102 130v-8h10M118 118h16" stroke={CY} strokeWidth="3" fill="none" />
    <path d="M91 150h14v10H91zM93 172h10v6H93zM40 152h8v8h-8zM64 152h8v8h-8z" fill={CY} />
    <path d="M45 152l4-16M68 152l6-16h5" stroke={CY} strokeWidth="3" />
    <rect x="130" y="143" width="52" height="8" fill={CY} />
    <path d="M128 208h54v6h-54zM122 230h60v3h-60zM116 243h66v3h-66z" fill={CY} />
    <rect x="152" y="159" width="20" height="8" fill="#f00" /><rect x="158" y="161" width="6" height="6" fill="#0f0" />
    <path d="M188 210h16v7h-16zM188 230h16v7h-16zM188 243h16v7h-16z" stroke="#f0f" strokeWidth="3" fill="none" />
    <rect x="134" y="101" width="14" height="8" fill="#f0f" /><rect x="138" y="103" width="6" height="4" fill="#ff0" />
    {['#f00', '#f00', '#0f0', '#f0f', '#ff0', '#f0f', '#f0f', CY, CY, RED, '#00f'].map((c, i) => (
      <g key={i} fill={c}>
        {i !== 2 && <rect x="227" y={17 + i * 21.500} width="42" height="3" />}
        <rect x="269" y={15 + i * 21.500} width={24 + (i % 3) * 4} height="4" />
      </g>
    ))}
    {[[54, 268, 42, 22], [110, 270, 40, 20], [165, 270, 50, 24], [240, 274, 46, 18], [192, 334, 38, 22], [243, 338, 40, 12], [366, 334, 46, 24], [366, 368, 40, 14], [366, 392, 38, 20], [222, 392, 38, 20]].map(([a, b, w, h]) => (
      <Callout key={`${a}-${b}`} x={a} y={b} w={w} h={h} />
    ))}
    <path d="M240 306h172v10H240zM206 372h120v3H206z" fill={CY} />
    <path d="M324 324l42 22M324 358l42 20M324 384l42 20" stroke={CY} strokeWidth="3" />
  </g>
);

const Inset: React.FC<{ x: number; y: number }> = ({ x, y }) => (
  <g transform={`translate(${x} ${y})`}>
    <rect width="114" height="90" stroke="#b366cc" strokeWidth="3" fill="none" strokeDasharray="30 3" />
    <rect width="30" height="6" fill="#b366cc" />
    <path d="M100 10h9v9h-9zM100 46h9v9h-9z" fill="#f00" />
    <path d="M14 26h5v9h-5zM12 40h5v9h-5zM88 12h5v9h-5z" fill="#808080" />
    {Array.from({ length: 10 }, (_, i) => <rect key={i} x={28 + rnd(i) * 50} y={12 + rnd(i + 7) * 40} width="8" height="5" fill={i % 4 === 0 ? RED : CY} />)}
    <rect x="12" y="62" width="50" height="18" stroke={CY} strokeWidth="3" fill="none" /><path d="M12 62h30v6H12z" fill={CY} />
  </g>
);

const rainbow = ['#fff', '#ff0', '#f0f', '#0f0', CY, '#f00', '#808080', '#ff0', '#0f0', '#f0f'];

const ModelDrawing = () => (
  <svg width="269" height="817" viewBox="0 6 807 2451" fill="none" className="absolute left-0 top-0" role="img" aria-label="Model space" shapeRendering="crispEdges">
    <TextBlock x={138} y={492} w={132} h={45} />
    <Notes x={282} y={471} w={112} h={115} seed={2} />
    <Notes x={420} y={498} w={80} h={50} seed={5} />
    <path d="M511 499h151v37H511zM511 508h151M511 516h151M511 524h151M530 508v28M555 508v28M580 508v28M605 508v28M632 508v28M514 512h60M600 520h50M520 530h40M640 530h18" stroke={CY} strokeWidth="3" />
    {[258, 322, 382, 446, 510].map((x, i) => <Ladder key={x} x={x} y={615} h={78} hot={[0.9, 0.85, 0.6, 0.3, 0][i]} />)}
    {[264, 326, 388, 452].map((x, i) => <Ladder key={x} x={x} y={738} h={66} hot={[0.9, 0.85, 0.4, 0][i]} />)}
    <path d="M592 684h18v6h6l6 20M594 700h10M590 725h34M618 700h8v14" stroke={CY} strokeWidth="5" />
    <rect x="617" y="700" width="16" height="18" fill="#f0f" />
    <path d="M585 748h46v10H585zM588 758h17v76h28v10H588z" fill="#f0f" />
    <path d="M595 762h7v76h-7zM588 846h45v10h-45z" fill="#c0c0c0" />
    {Array.from({ length: 7 }, (_, i) => <rect key={i} x={581} y={762 + i * 11} width="7" height="6" fill={CY} />)}
    <path d="M660 771h30v12h-30zM664 792h49v11h-49z" fill="#ff0" /><path d="M642 790l18-10M648 810l18-10" stroke="#ff0" strokeWidth="3" />
    <path d="M666 822h27v6h-27zM670 836h26v6h-26zM666 847h30v4h-30zM646 840l20-8v4l-20 8z" fill="#0f0" />
    <path d="M396 846h51v9h-51zM396 858h51v3h-51z" fill="#b366cc" />
    <rect x="274" y="865" width="427" height="433" stroke="#b366cc" strokeWidth="3" />
    <PlanSheet x={274} y={865} />
    <path d="M276 887h10v6h-10zM298 890h16v4h-16z" fill={CY} />
    <path d="M588 884h20v3h-20zM585 893h27v3h-27zM598 882v18" fill="#f00" stroke="#f00" strokeWidth="2" />
    <path d="M586 903h25v3h-25zM590 908h18v8h-18z" fill={RED} />
    <path d="M615 882h46v3h-46zM615 891h24v3h-24zM615 899h54v3h-54zM615 906h34v3h-34zM615 928h50v3h-50zM615 934h30v3h-30zM615 942h64v3h-64zM618 946h12v10h-12zM615 962h72v3h-72zM687 958h9v10h-9zM612 974h42v3h-42z" fill={CY} />
    <path d="M592 927h16v10h-16zM592 957h16v12h-16z" fill="#ff0" /><path d="M596 932h10v8h-10zM594 940h13v14h-13z" fill="#f0f" /><path d="M595 976h13v8h-13z" fill={RED} />
    <path d="M624 995h33M628 1003h26M624 1011h33M640 988v30M632 1030h18v10h-18z" stroke={RED} strokeWidth="4" />
    <path d="M620 1090h54v28h-54z" stroke={RED} strokeWidth="4" strokeDasharray="8 3" />
    <path d="M598 1060h70v12M606 1050h20M650 1048l10 5M598 1072h22M608 1138h64M622 1130h50" stroke={CY} strokeWidth="4" />
    <Inset x={275} y={1207} />
    <path d="M718 876h16v8h-16z" fill={CY} /><path d="M720 880h12v5h-12z" fill="#f0f" />
    <TextBlock x={105} y={876} w={132} h={74} seed={7} />
    <Notes x={117} y={957} w={112} h={190} seed={3} />
    <path d="M120 957h20v22h-20z" fill="#f00" />
    <Schedule x={110} y={1151} w={113} h={122} />
    {Array.from({ length: 8 }, (_, i) => (
      <g key={i} fill={CY}><rect x="718" y={1045 + i * 9} width="7" height="6" /><rect x="729" y={1045 + i * 9} width={40 + rnd(i) * 30} height="4" /></g>
    ))}
    <path d="M729 1033h18v3h-18zM740 1049h67v3h-67zM780 1045h9v12h-9zM745 1112h10v8h-10z" fill={CY} />
    <TextBlock x={168} y={1308} w={132} h={72} seed={11} />
    <Notes x={314} y={1312} w={112} h={106} seed={6} />
    <Notes x={447} y={1315} w={106} h={100} seed={8} />
    <Schedule x={566} y={1310} w={113} h={119} />
    <rect x="801" y="618" width="6" height="3" fill="#080" />

    <g transform="translate(0 1440)">
      <path d="M0 41h803v884" stroke="#080" strokeWidth="3" />
      <rect x="396" y="93" width="51" height="14" fill="#b366cc" />
      <rect x="137" y="113" width="554" height="431" stroke="#b366cc" strokeWidth="3" />
      <path d="M150 114h50v20h-50zM230 128h40v6h-40zM300 113h44v9h-44zM495 117h36v9h-36z" fill="#b366cc" />
      <PlanSheet x={268} y={113} />
      <path d="M148 137h67v200h-67zM217 137h67v200h-67z" stroke="#ffaa80" strokeWidth="3" />
      {Array.from({ length: 27 }, (_, i) => <rect key={i} x={151 + rnd(i) * 8} y={140 + i * 7} width={28 + rnd(i + 3) * 20} height="4" fill={rainbow[(i * 3) % 10]} />)}
      {Array.from({ length: 14 }, (_, i) => <rect key={i} x={220} y={140 + i * 7} width={20 + rnd(i + 8) * 28} height="4" fill={i > 8 ? '#fff' : rainbow[(i * 7) % 10]} />)}
      <path d="M149 340h101v94H149zM149 436h101v96H149z" stroke="#00f" strokeWidth="3" />
      {Array.from({ length: 20 }, (_, i) => (
        <g key={i} fill={['#fff', '#f00', '#0f0', '#f0f', CY, RED, '#ff0', '#00f', RED, '#ffaa80'][(i * 3) % 10]}>
          {[156, 178, 201, 225].map((x) => <rect key={x} x={x} y={348 + i * 8 + (i > 9 ? 16 : 0)} width="18" height="3" />)}
        </g>
      ))}
      <path d="M610 248h46v4h-46zM618 258h30v4h-30zM622 275h22v16h-22zM628 243h12v30h-12z" fill={RED} />
      <Inset x={304} y={433} />
      <TextBlock x={-12} y={111} w={128} h={92} seed={21} />
      <Notes x={-26} y={215} w={124} h={225} seed={17} />
      <Schedule x={-38} y={454} w={154} h={158} />
      <TextBlock x={134} y={558} w={160} h={98} seed={31} />
      <Notes x={295} y={562} w={142} h={120} seed={13} />
      <Notes x={457} y={566} w={138} h={108} seed={16} />
      <Schedule x={611} y={557} w={153} h={158} />
      {[270, 332, 394, 457].map((x, i) => <Ladder key={x} x={x} y={729} h={68} hot={[0.9, 0.85, 0.4, 0][i]} />)}
      {[272, 332, 394, 457, 520].map((x, i) => <Ladder key={x} x={x} y={814} h={82} hot={[0.9, 0.85, 0.6, 0.3, 0][i]} />)}
      <path d="M0 1005h30v6H0z" fill={CY} />
    </g>
  </svg>
);

const CommandLine = () => (
  <div className="absolute bottom-0 left-[61px] w-[460px]">
    <div className="ml-16 flex flex-col items-start gap-[5px] pb-[2px] font-['DejaVu_Sans_Mono','Liberation_Mono',monospace] text-[12px] leading-[15px] text-[#8f9398]">
      {['Command: XREF', 'Command:', 'Command: *Cancel*'].map((l) => (
        <span key={l} className="rounded-sm bg-[#4a5058]/70 px-px">{l}</span>
      ))}
    </div>
    <div className="flex h-7 rounded-l-sm bg-[#22272f]">
      <span className="flex w-[58px] items-center justify-between pl-1 pr-[6px]">
        <Ic w={5} h={17}><path d="M1 0v17M4 0v17" stroke={G} strokeDasharray="2 1" strokeWidth="1.500" /></Ic>
        <Ic w={10} h={10}><path d="M1 1l8 8M9 1L1 9" stroke={G} strokeWidth="2" /></Ic>
        <Ic><path d="M1 13l7-7c-1-4 2-6 5-5l-2 2 1 2 2 1 2-2c1 3-2 6-5 5l-7 7c-2 0-3-1-3-3z" fill={G} /></Ic>
      </span>
      <label className="flex flex-1 items-center bg-[#b4b4b4] pl-1">
        <Ic w={16} h={12}><path d="M.5.5h15v11H.5z" stroke="#444" /><path d="M3 3l3 3-3 3M7 9h5" stroke="#444" /></Ic>
        <svg width="8" height="5" viewBox="0 0 8 5" className="ml-[2px]" aria-hidden="true"><path d="M0 0h8L4 5z" fill="#444" /></svg>
        <input
          aria-label="Command"
          placeholder="Type a command"
          className="ml-[6px] flex-1 bg-transparent font-['DejaVu_Sans_Mono','Liberation_Mono',monospace] text-[12px] italic placeholder:text-[#50545a]"
        />
      </label>
    </div>
  </div>
);

const Viewport = () => (
  <main className="relative min-w-0 flex-1 overflow-hidden bg-black">
    <ModelDrawing />
    <CommandLine />
    <div className="absolute right-3 top-[9px] flex items-end gap-[9px]">
      <Ic w={11} h={11}><path d="M0 8h11v3H0z" fill="#eee" /></Ic>
      <Ic w={11} h={11}><path d="M1 4h6v6H1z" stroke="#eee" strokeWidth="2" /><path d="M3 1h7v7" stroke="#eee" strokeWidth="1.500" /></Ic>
      <Ic w={10} h={11}><path d="M1 1l8 9M9 1l-8 9" stroke="#eee" strokeWidth="2.500" /></Ic>
    </div>
    <div className="absolute right-1 top-[27px] h-3 w-8 rounded bg-[#61535c]" />
  </main>
);

/* ---------- properties palette ---------- */

interface Prop { value: string; dim?: boolean; kind?: 'swatch' | 'line' }

const groups: Prop[][] = [
  [
    { value: 'ByLayer', kind: 'swatch' }, { value: 'S-XIST' }, { value: 'ByLayer', kind: 'line' }, { value: '1.000' },
    { value: 'ByLayer', kind: 'line' }, { value: 'ByLayer' }, { value: '0"' },
  ],
  [{ value: 'ByColor', dim: true }, { value: 'SS_ENG.ctb' }, { value: 'Model', dim: true }, { value: 'Color dependent', dim: true }],
  [
    { value: "116'-3 5/8\"", dim: true }, { value: "10'-1 3/8\"", dim: true }, { value: '0"', dim: true },
    { value: "564'-7 3/4\"", dim: true }, { value: "896'-1 1/4\"", dim: true },
  ],
  [{ value: '4:1_XREF' }, { value: 'No' }, { value: 'Yes' }, { value: 'No', dim: true }, { value: '' }],
];

const PropertiesPalette = () => (
  <aside className="flex w-[620px] shrink-0 flex-col pb-[3px] pt-[2px]">
    <h2 className="flex h-5 items-center gap-[6px] rounded-t bg-[#2f3541] pb-[2px] pl-[6px] text-[11px]">
      <Ic w={3} h={10}><path d="M.5 0v10M2.500 0v10" stroke={G} strokeDasharray="1 1" /></Ic>
      PROPERTIES
    </h2>
    <div className="flex flex-1 flex-col border-b border-[#2b313d] pl-2 pr-[18px] pt-3">
      <div className="mb-[3px] flex items-center">
        <div className="relative flex-1">
          <select aria-label="Selection" className={`${selectCls} block h-6`}><option /></select>
          <span className="pointer-events-none absolute right-1 top-[9px]"><Caret big /></span>
        </div>
        <div className="ml-2 flex gap-2">
          <button aria-label="Pickadd"><Ic><path d="M0 2h7v9H0z" fill="#8cc8f8" /><path d="M5 7h10v9H5z" fill="#8cc8f8" stroke="#3c4453" /><path d="M12 0v7M8.500 3.500h7" stroke={GR} strokeWidth="2" /></Ic></button>
          <button aria-label="Select objects"><Ic><path d="M.5.5h13v10H.5z" stroke={GR} strokeDasharray="2 1" /><path d="M3 3h8v6H3z" fill={GR} /><Cursor x={8} y={4} /></Ic></button>
          <button aria-label="Quick select" className="-mr-[7px]"><QuickSelect /></button>
        </div>
      </div>
      {groups.map((rows, g) => (
        <table key={g} className="mb-[2px] w-full table-fixed border-collapse border-r border-[#2f3541]">
          <colgroup><col className="w-[292px]" /><col /></colgroup>
          <thead>
            <tr className="h-5 bg-[#2f3541]">
              <th colSpan={2} className="p-0"><span className="flex justify-end pr-[7px]"><Caret big /></span></th>
            </tr>
          </thead>
          <tbody>
            {rows.map((r, i) => (
              <tr key={i} className="h-[19px] border-b border-[#2f3541]">
                <td className="p-0" />
                <td className={`border-l border-[#2f3541] py-0 pl-[3px] text-[11px] leading-[18px] ${r.dim ? 'text-[#9198a2]' : ''}`}>
                  <span className="flex h-[18px] items-center">
                    {r.kind === 'swatch' && <span className="mr-[6px] size-[14px] border border-[#e6e6e6] bg-[#cc6666]" />}
                    {r.kind === 'line' && <span className="mr-1 h-px w-[66px] bg-white" />}
                    {r.value}
                  </span>
                </td>
              </tr>
            ))}
          </tbody>
        </table>
      ))}
    </div>
  </aside>
);

/* ---------- external references palette ---------- */

const refs = [
  { icon: 'plain', name: '26032_S101*', status: 'Opened', size: '916 KB', type: 'Current', date: '5/21/2026 10:38:1...', path: '' },
  { icon: 'warn', name: '111509 Sweeney CA-Eng Final Sig', status: 'Orphan...', size: '', type: 'Attach', date: '', path: '.\\10. STAMPS\\111509 Sweeney CA-Eng Final Sig.dwg' },
  { icon: 'warn', name: 'SSG_TITLEBLOCK_24x36', status: 'Not Fou...', size: '', type: 'Attach', date: '', path: '.\\TITLEBLOCK\\S.S._TITLEBLOCK_24x36.dwg' },
  { icon: 'clip', name: 'XREF1', status: 'Loaded', size: '1.55 MB', type: 'Overlay', date: '5/22/2026 2:46:20 ...', path: '..\\2_Arch\\CAD\\3843 College Ave, San Diego CA 92115.dwg' },
] as const;

const details = [
  ['Reference Name', 'XREF1', false],
  ['Status', 'Loaded', true],
  ['Size', '1.55 MB', true],
  ['Type', 'Overlay', false],
  ['Date', '5/22/2026 2:46:20 PM', true],
  ['Found At', 'C:\\Users\\CameronEtienne\\Sweeney Structures\\Sweeney Structural Group - SSG Sharepoint Drive\\1. Projects\\1. Active\\26032 - College Ave ADU + JADU\\2_Arch\\CAD\\3843 Coll...', true],
  ['Saved Path', '..\\2_Arch\\CAD\\3843 College Ave, San Diego CA 92115.dwg', false],
] as const;

const XrefPalette = () => (
  <div className="absolute bottom-px left-[269px] right-[470px] top-[37px] flex rounded-t border border-[#262c37] bg-[#2f3541] text-[11px]">
    <div className="flex w-[22px] flex-col items-center pb-[2px] pt-[6px]">
      <button aria-label="Close palette"><Ic w={9} h={9}><path d="M1 1l7 7M8 1L1 8" stroke="#fff" strokeWidth="2.500" /></Ic></button>
      <button aria-label="Auto-hide" className="mt-[10px]"><Ic w={9} h={10}><path d="M1 0v10" stroke="#fff" strokeWidth="1.500" /><path d="M3 2v6M9 1v8L4 5z" fill="#fff" /></Ic></button>
      <button aria-label="Palette settings" className="mt-[9px]"><Gear size={10} c="#fff" hole="#2f3541" /></button>
      <span className="mt-auto rotate-180 leading-[16px] [writing-mode:vertical-rl]">EXTERNAL REFERENCES</span>
      <span className="mt-[10px]"><Ic w={16} h={16}><path d="M0 3h16v13H0z" fill={G} /><path d="M4 1h2V0h4v1h2v4H4z" fill="#fff" stroke="#2f3541" /></Ic></span>
    </div>
    <div className="mb-[3px] mr-[2px] mt-[2px] flex min-w-0 flex-1 flex-col rounded-t border border-[#262c37] bg-[#3c4453] pb-10 pl-[9px] pr-[10px]">
      <div className="flex h-[47px] items-center pl-1">
        <button aria-label="Attach" className="flex items-center gap-2"><Ic w={14} h={16}><path d="M1 2h9l4 3v11H1z" fill={G} /><path d="M2 3h7l4 3v5H2z" fill="#2f66b5" /><path d="M1 16v-5c4-1 9 1 13 5z" fill={O} /><rect x="1" y="1" width="4" height="8" rx="2" fill="#3c4453" stroke={B} strokeWidth="1.300" /></Ic><Caret big /></button>
        <button aria-label="Refresh" className="ml-2 flex items-center gap-[7px]"><Ic><path d="M2 7a6 6 0 0111-3M14 9a6 6 0 01-11 3" stroke={GR} strokeWidth="2" /><path d="M15 1v6H9zM1 15V9h6z" fill={GR} /></Ic><Caret big /></button>
        <button aria-label="Change path" className="ml-2 flex items-center gap-[7px]"><Ic><path d="M0 4h14l2 2v10H0z" fill={G} /><path d="M10 4h3v4h-3zM6 11h9v4H6z" fill="#777" /><path d="M8 12h6v4H8z" fill="#fff" /><rect x="4" y="0" width="5" height="8" rx="2" fill="#31506e" stroke={B} /></Ic><Caret big /></button>
        <button aria-label="Palette help" className="ml-[9px]"><HelpIcon /></button>
      </div>
      <div className="flex min-h-0 flex-1 flex-col border border-[#262c37]">
        <h3 className="flex h-[22px] items-center justify-between border-b-2 border-[#262c37] bg-[#2f3541] pl-[9px] pr-[5px] font-bold">
          File References
          <span className="flex gap-[6px]"><ListIcon /><Ic w={11} h={11}><path d="M0 1.500h5" stroke={G} strokeWidth="2" /><path d="M2.500 2v8H6M2.500 5.500H6" stroke={G} /><path d="M7 5.500h4M7 9.500h4" stroke={G} strokeWidth="2" /></Ic></span>
        </h3>
        <table className="w-full table-fixed border-collapse text-left">
          <colgroup>
            <col className="w-[18px]" /><col className="w-[372px]" /><col className="w-[72px]" /><col className="w-[59px]" /><col className="w-[72px]" /><col className="w-[108px]" /><col />
          </colgroup>
          <thead>
            <tr className="h-6 border-b border-[#2f3541] bg-[#464f63]">
              <th className="border-r border-[#2f3541] p-0" />
              <th className="border-r border-[#2f3541] p-0 pl-[7px] pr-[7px] font-normal">
                <span className="flex items-center justify-between">Reference Name<Ic w={9} h={5}><path d="M0 5h9L4.500 0z" fill={G} /></Ic></span>
              </th>
              {['Status', 'Size', 'Type', 'Date', 'Saved Path'].map((h) => (
                <th key={h} className="border-r border-[#2f3541] p-0 pl-[7px] font-normal last:border-r-0">{h}</th>
              ))}
            </tr>
          </thead>
          <tbody>
            {refs.map((r) => (
              <tr key={r.name} className="h-[19px] whitespace-nowrap leading-[19px]">
                <td className="p-0"><DwgIcon kind={r.icon} /></td>
                <td className={`p-0 pl-[2px] ${r.name === 'XREF1' ? 'bg-[#7388a6]' : ''}`}>{r.name}</td>
                <td className="p-0 pl-[2px]"><span className="flex items-center gap-[6px]"><span className="w-[10px]">{r.icon === 'warn' && <Warn />}</span>{r.status}</span></td>
                <td className="p-0 pl-[2px]">{r.size}</td>
                <td className="p-0 pl-[2px]">{r.type}</td>
                <td className="p-0 pl-[2px]">{r.date}</td>
                <td className="p-0 pl-[2px]">{r.path}</td>
              </tr>
            ))}
          </tbody>
        </table>
        <div className="mt-auto flex h-[10px] items-center justify-center border-y-2 border-[#262c37] bg-[#2f3541]">
          <span className="flex gap-[2px]">{[0, 1, 2, 3, 4].map((i) => <span key={i} className="size-[2px] bg-[#e6e6e6]" />)}</span>
        </div>
        <h3 className="flex h-[22px] items-center justify-between border-b-2 border-[#262c37] bg-[#2f3541] pl-[9px] pr-[6px] font-bold">
          Details
          <span className="flex items-center gap-[5px]">
            <Ic w={12} h={12}><path d="M0 0h7l3 3v9H0z" fill={G} /><path d="M5 5h7v5H5z" fill="#2f3541" /><path d="M6 8h6" stroke={B} strokeWidth="2" /></Ic>
            <Ic w={12} h={12}><path d="M0 0h12v12H0z" fill="#5ba8e8" /><path d="M0 9l4-5 3 4 2-2 3 3v3H0z" fill="#2f6fb5" /><circle cx="9" cy="3" r="1.500" fill="#fff" /></Ic>
            <span className="ml-[6px]"><Caret big /></span>
          </span>
        </h3>
        <dl className="h-[226px] pl-[6px] pt-px">
          {details.map(([k, v, dim]) => (
            <div key={k} className="flex h-[19px] whitespace-nowrap leading-[19px]">
              <dt className="w-[198px] shrink-0">{k}</dt>
              <dd className={dim ? 'text-[#9198a2]' : ''}>{v}</dd>
            </div>
          ))}
        </dl>
      </div>
    </div>
  </div>
);

/* ---------- status bar ---------- */

const Cell: React.FC<{ name: string; cls: string; on?: boolean; children: React.ReactNode }> = ({ name, cls, on, children }) => (
  <button aria-label={name} className={`flex h-[23px] items-center justify-center ${cls} ${on ? 'bg-[#5e8fc2]' : 'bg-[#3c4453]'}`}>{children}</button>
);

const Anno = ({ children }: { children?: React.ReactNode }) => (
  <Ic><path d="M7 1l2 4 1 6 4 3v2l-5-2H5l-5 2v-2l4-3 1-6z" fill="#fff" fillOpacity=".9" />{children}</Ic>
);

const StatusBar = () => (
  <footer className="flex h-[29px] items-start justify-between bg-[#222933]">
    <nav className="flex h-6 items-center pl-4 text-[11px]">
      <button aria-label="Layout menu"><Burger /></button>
      <button className="ml-[10px] h-6 w-[69px] bg-[#3c4453] font-bold [clip-path:polygon(10px_0,100%_0,59px_100%,0_100%)]">Model</button>
      <button className="ml-[5px] w-[29px]">SXXX</button>
      <span className="ml-2"><Slash /></span>
      <button aria-label="New layout" className="ml-[9px]"><Plus /></button>
      <span className="ml-[10px]"><Slash /></span>
    </nav>
    <div className="flex items-center pr-[2px] pt-[3px] text-[11px]">
      <Cell name="Snap" cls="w-[22px]" on><Ic><path d="M5 2.500h10.500v13h-13V6" stroke="#fff" /><path d="M.5.5h4v4h-4z" stroke="#fff" /></Ic></Cell>
      <Cell name="Snap menu" cls="w-[17px]"><Caret big /></Cell>
      <Cell name="Lineweight display" cls="ml-[2px] w-[23px]" on><Ic><path d="M0 1.500h16M0 5.500h9M10 5.500h6M0 9.500h12M0 14h16" stroke="#fff" strokeWidth="2" /></Ic></Cell>
      <Cell name="Annotation visibility" cls="ml-1 w-[23px]" on><Anno><circle cx="13" cy="3" r="2" stroke="#fff" /></Anno></Cell>
      <Cell name="Auto scale" cls="w-6"><Anno><path d="M14 0l-4 5h3l-1 3 4-4h-3z" fill="#fff" /></Anno></Cell>
      <Cell name="Annotation" cls="w-6"><Anno /></Cell>
      <Cell name="Annotation scale" cls="w-[67px] gap-[5px] whitespace-nowrap">4:1_XREF <Caret big /></Cell>
      <Cell name="Workspace" cls="ml-[3px] w-10 gap-[10px]"><Gear /><Caret big /></Cell>
      <Cell name="Annotation monitor" cls="ml-[2px] w-6"><Ic><path d="M8 0v16M0 8h16" stroke="#fff" strokeWidth="1.500" /></Ic></Cell>
      <Cell name="Isolate objects" cls="ml-[3px] w-6"><Ic><path d="M.5.5h6v6h-6zM4 15.500h7L7.500 9.500z" stroke={G} /><circle cx="12.500" cy="7" r="3" stroke={G} /></Ic></Cell>
      <Cell name="Hardware acceleration" cls="ml-1 w-[22px]" on><Ic><circle cx="8" cy="8" r="7.500" fill="#86abd2" stroke="#fff" /><path d="M7 10l6-6" stroke="#fff" strokeWidth="1.500" /></Ic></Cell>
      <Cell name="Drawing notifications" cls="ml-1 w-[84px] gap-[11px]">
        <Ic><path d="M0 0h9l4 4v5H0z" fill="#3a6cc0" /><path d="M0 8l8 8H0z" fill={O} /><path d="M0 9h6v6H0z" fill="#fbb117" /><path d="M6 0v8M0 5h12" stroke="#fff" /><path d="M9 12l3 3 4-5" stroke={GR} strokeWidth="2" /></Ic>
        <Ic><path d="M0 1h15v12H0z" fill={G} /><path d="M1 8l4-4 4 5 5-6" stroke="#31506e" /><path d="M12 7l4 9H7z" fill="#f08a4b" /><path d="M12 10v3" stroke="#fff" /></Ic>
        <Ic><rect x="1" y="0" width="4" height="7" rx="2" stroke={G} /><path d="M7 3c5-1 6 3 6 4M1 9.500h6v5H1z" stroke={G} /><path d="M12 7l4 9H7z" fill="#f08a4b" /><path d="M12 10v3" stroke="#fff" /></Ic>
      </Cell>
      <Cell name="Clean screen" cls="ml-[3px] w-6"><Ic><path d="M.5 1.500h15v12H.5z" stroke={G} /><path d="M9 6l4-3M10 3h3v3M7 9l-4 3M3 9v3h3" stroke={G} /></Ic></Cell>
      <Cell name="Customization" cls="ml-[2px] w-6"><Ic w={16} h={13}><path d="M0 1h16M0 6.500h16M0 12h16" stroke="#fff" strokeWidth="1.500" /></Ic></Cell>
    </div>
  </footer>
);

/* ---------- taskbar ---------- */

const taskApps: { name: string; dot?: boolean; active?: boolean; icon: React.ReactNode }[] = [
  { name: 'Task view', icon: <Ic w={24} h={24}><path d="M6 2h18v16H6z" fill="#f5f5f5" /><path d="M0 8h17v14H0z" fill="#8b8b8b" fillOpacity=".85" /></Ic> },
  { name: 'Snipping Tool', dot: true, icon: <Ic w={24} h={24}><rect x="0" y="0" width="20" height="22" rx="2" fill="#f5f5f5" /><path d="M4 4h12v12H4z" stroke="#c0272d" strokeWidth="2.500" strokeDasharray="3 1" /><path d="M22 10l-6 8M13 12l6 6" stroke="#3a9be8" strokeWidth="1.500" /><circle cx="14" cy="20" r="2.500" stroke="#3a9be8" strokeWidth="2" /><circle cx="21" cy="19" r="2.500" stroke="#3a9be8" strokeWidth="2" /></Ic> },
  { name: 'Outlook', dot: true, icon: <Ic w={24} h={24}><path d="M2 9l11-8 10 8v14H2z" fill="#1f6fd6" /><path d="M2 12l14-9 6 5-12 15H2z" fill="#50b5f5" /><path d="M10 23l13-12v12z" fill="#8fd3fb" /><path d="M1 11h11v11H1z" fill="#0f5bbd" /><circle cx="6.500" cy="16.500" r="3" stroke="#fff" strokeWidth="1.800" /></Ic> },
  { name: 'File Explorer', dot: true, icon: <Ic w={24} h={24}><path d="M0 2h9l2 3h13v4H0z" fill="#e8a020" /><path d="M0 6h24v16H0z" fill="#fbcf55" /><path d="M5 15h14v7H5z" fill="#2a7fd8" /></Ic> },
  { name: 'Teams', dot: true, icon: <Ic w={28} h={26}><circle cx="10" cy="6" r="4.500" fill="#7b83eb" /><path d="M5 11h16v8a7 7 0 01-14 4z" fill="#7b83eb" /><path d="M1 10h12v12H1z" fill="#4b53bc" /><path d="M4 13h6M7 13v7" stroke="#fff" strokeWidth="1.500" /><circle cx="21" cy="6" r="6.500" fill="#0f8a0f" /><path d="M18 6l2 2 4-4" stroke="#4fd04f" strokeWidth="1.500" /></Ic> },
  { name: 'Spotify', dot: true, icon: <FaSpotify size={23} color="#1ed760" /> },
  { name: 'Chrome', dot: true, icon: <Ic w={24} h={24}><path d="M12 12L1.600 6A12 12 0 0122.400 6z" fill="#e33b2e" /><path d="M12 12L22.400 6A12 12 0 0112 24z" fill="#fbc116" /><path d="M12 12v12A12 12 0 011.600 6z" fill="#2da94f" /><circle cx="12" cy="12" r="5.500" fill="#fff" /><circle cx="12" cy="12" r="4.300" fill="#2a7fe8" /></Ic> },
  { name: 'WhatsApp', dot: true, icon: <FaWhatsapp size={25} color="#25d366" /> },
  { name: 'AutoCAD LT', active: true, icon: <Ic w={22} h={24}><path d="M0 2l3-2h19v18H0z" fill="#e51050" /><path d="M2 17h20v7H2z" fill="#7a0f2b" /><path d="M0 2l3-2v21l-3 3z" fill="#f2747f" /><text x="8" y="14" fontSize="13" fontWeight="700" fill="#fff" fontFamily="Open Sans">A</text><text x="9" y="23" fontSize="6" fontWeight="700" fill="#fff" fontFamily="Open Sans">LT</text></Ic> },
  { name: 'Solver', icon: <Ic w={22} h={22}><rect width="22" height="22" rx="3" fill="#2474dc" />{[0, 30, 60, 90, 120, 150].map((a) => <path key={a} d="M11 3v16" stroke="#fff" strokeWidth="1.500" transform={`rotate(${a} 11 11)`} />)}<circle cx="11" cy="11" r="2" fill="#2474dc" /></Ic> },
  { name: 'Planner', dot: true, icon: <Ic w={24} h={24}><rect width="24" height="24" rx="7" fill="#5b62ea" /><path d="M0 13l24 5a7 7 0 01-7 6H7a7 7 0 01-7-7z" fill="#2a8af0" /><path d="M8 0h9a7 7 0 017 7v3z" fill="#c06bf0" /><path d="M6 7l9 3 4-1M5 15l5-1 9 3M8 8l8 8" stroke="#fff" strokeWidth="3" /></Ic> },
  { name: 'Settings', dot: true, icon: <Ic w={24} h={24}>{[0, 60, 120].map((a) => <rect key={a} x="8.500" y="0" width="7" height="24" rx="1" fill="#8a8f96" transform={`rotate(${a} 12 12)`} />)}<circle cx="12" cy="12" r="8.500" fill="#8a8f96" /><circle cx="12" cy="12" r="5" fill="#2a64b0" stroke="#d0d4da" /></Ic> },
  { name: 'Assistant', dot: true, icon: <Ic w={20} h={20}><rect width="20" height="20" rx="3" fill="#2b2467" /><path d="M14 6.500A4.500 4.500 0 1010.500 13c3 0 4-2 3.500-4h-3M11 13l3 3" stroke="#fff" strokeWidth="1.800" /></Ic> },
];

const Taskbar = () => (
  <div className="relative flex h-12 items-center justify-center border-t border-[#4a4d52] bg-[#222222] pl-[10px]">
    <button aria-label="Start" className="mr-[13px]">
      <Ic w={24} h={24}><path d="M0 0h11v11H0zM13 0h11v11H13zM0 13h11v11H0zM13 13h11v11H13z" fill="#45b8f8" /></Ic>
    </button>
    <label className="mr-[2px] flex h-8 w-[220px] items-center gap-[9px] rounded-full border border-[#555] bg-[#434343] pl-[11px]">
      <Search size={16} color="#e8e8e8" />
      <input aria-label="Search" placeholder="Search" className="w-32 bg-transparent text-[13px] placeholder:text-[#d0d0d0]" />
    </label>
    {taskApps.map((a) => (
      <button key={a.name} aria-label={a.name} className="relative flex h-[47px] w-11 items-center justify-center">
        <span className={`flex size-10 items-center justify-center rounded ${a.active ? 'bg-[#333638]' : ''}`}>{a.icon}</span>
        {a.dot && <span className="absolute bottom-1 h-[3px] w-[6px] rounded-full bg-[#9a9a9a]" />}
        {a.active && <span className="absolute bottom-1 h-[3px] w-4 rounded-full bg-[#4cc2ff]" />}
      </button>
    ))}
    <div className="absolute right-5 flex h-full items-center">
      <ChevronUp size={15} color="#fff" />
      <span className="ml-4"><Ic w={17} h={15}><path d="M4 13a4 4 0 010-8 5.500 5.500 0 0110 0c4 1 3 8 0 8z" fill="#2a8df0" /><circle cx="12" cy="11" r="4" fill="#1b62c8" /><path d="M10 10h4M10 12h4" stroke="#fff" /></Ic></span>
      <span className="ml-4"><Mic size={17} color="#7fc0d8" /></span>
      <span className="ml-[14px]"><Wifi size={18} color="#fff" /></span>
      <span className="ml-[5px]"><Volume2 size={16} color="#e0e0e0" /></span>
      <span className="ml-[9px]"><Ic w={20} h={13}><rect x=".5" y="2.500" width="17" height="9" rx="3" fill="#6fd08a" stroke="#fff" /><path d="M19 5v4" stroke="#fff" strokeWidth="1.500" /><path d="M10 0L6 7h3l-1 5 5-7h-3z" fill="#fff" stroke="#222" strokeWidth=".5" /></Ic></span>
      <div className="w-[71px] text-right text-[11px] leading-[16px]">3:07 PM<br />5/22/2026</div>
    </div>
  </div>
);

const App: React.FC = () => (
  <div className="flex h-screen min-h-[720px] flex-col overflow-hidden bg-[#222933] font-['Open_Sans','Noto_Sans',sans-serif] text-[11px] leading-[15px] text-[#f4f5f7]">
    <TitleBar />
    <RibbonTabs />
    <div className="flex bg-[#3c4453]">
      <DrawPanel />
      <ModifyPanel />
      <AnnotationPanel />
      <LayersPanel />
      <BlockPanel />
      <PropertiesRibbonPanel />
      <ToolsRight />
    </div>
    <FileTabs />
    <div className="relative flex min-h-0 flex-1 flex-col bg-[#3c4453] pt-1">
      <div className="flex min-h-0 flex-1 gap-1 pb-1">
        <Viewport />
        <PropertiesPalette />
      </div>
      <StatusBar />
      <XrefPalette />
    </div>
    <Taskbar />
  </div>
);

export default App;
